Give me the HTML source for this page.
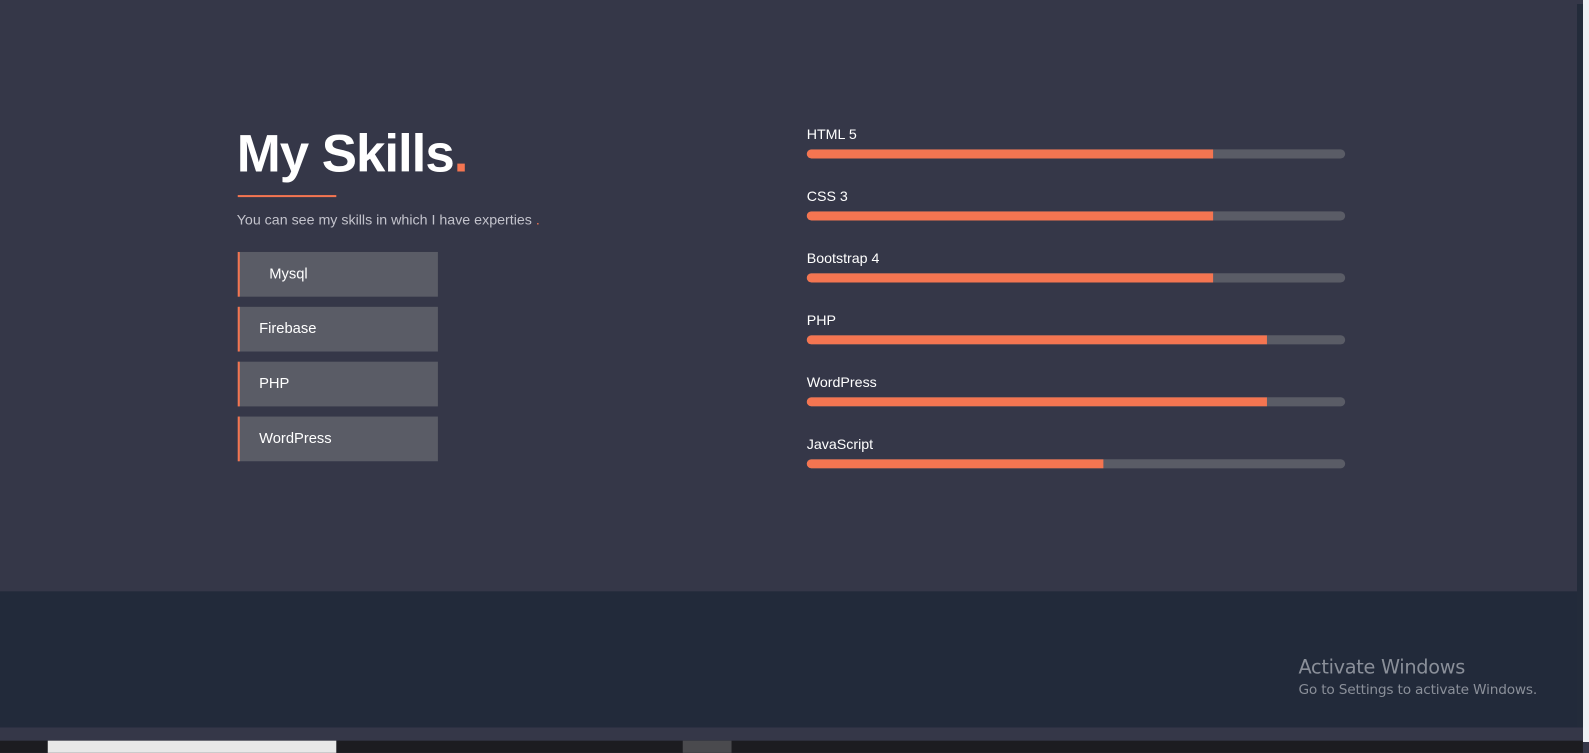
<!DOCTYPE html>
<html><head><meta charset="utf-8"><style>
*{margin:0;padding:0;box-sizing:border-box}
body{width:1589px;height:742px;overflow:hidden;background:#353748;font-family:"Liberation Sans",sans-serif;position:relative}
.abs{position:absolute}
#w{position:absolute;left:0;top:0;width:1564px;height:731px;transform:scale(1.016);transform-origin:0 0}
h1{position:absolute;left:233px;top:122px;font-size:52px;font-weight:bold;color:#fff;letter-spacing:-1px}
h1 span{color:#f47551}
.line{left:234px;top:192px;width:97px;height:2px;background:#f47551}
.sub{left:233px;top:208px;font-size:14px;color:#c3c3cc}
.sub span{color:#f47551}
.box{position:absolute;left:234px;width:197px;height:44px;background:#5a5c66;border-left:2px solid #f47551;color:#fff;font-size:14.5px;line-height:44px;padding-left:19px}
.lbl{position:absolute;left:794px;font-size:14px;color:#fff}
.track{position:absolute;left:794px;width:530px;height:9px;border-radius:5px;background:#5a5c66;overflow:hidden}
.fill{height:100%;background:#f47551;border-radius:5px 0 0 5px}
</style></head><body>
<div id="w">
<h1>My Skills<span>.</span></h1>
<div class="abs line"></div>
<div class="abs sub">You can see my skills in which I have experties <span>.</span></div>
<div class="box" style="top:248px;padding-left:29px">Mysql</div>
<div class="box" style="top:302px">Firebase</div>
<div class="box" style="top:356px">PHP</div>
<div class="box" style="top:410px">WordPress</div>

<div class="lbl" style="top:124px">HTML 5</div>
<div class="track" style="top:147px"><div class="fill" style="width:400px"></div></div>
<div class="lbl" style="top:185px">CSS 3</div>
<div class="track" style="top:208px"><div class="fill" style="width:400px"></div></div>
<div class="lbl" style="top:246px">Bootstrap 4</div>
<div class="track" style="top:269px"><div class="fill" style="width:400px"></div></div>
<div class="lbl" style="top:307px">PHP</div>
<div class="track" style="top:330px"><div class="fill" style="width:453px"></div></div>
<div class="lbl" style="top:368px">WordPress</div>
<div class="track" style="top:391px"><div class="fill" style="width:453px"></div></div>
<div class="lbl" style="top:429px">JavaScript</div>
<div class="track" style="top:452px"><div class="fill" style="width:292px"></div></div>

<div class="abs" style="left:0;top:582px;width:1558px;height:134px;background:#222a3a"></div>
<div class="abs" style="left:0;top:729px;width:1558px;height:12px;background:#1c1c20"></div>
<div class="abs" style="left:47px;top:729px;width:284px;height:12px;background:#e8e8e8"></div>
<div class="abs" style="left:672px;top:729px;width:48px;height:12px;background:#4a4a4e"></div>
<div class="abs" style="left:1278px;top:646px;font-size:19px;color:#8a8f99;font-family:'DejaVu Sans',sans-serif;letter-spacing:-0.3px">Activate Windows</div>
<div class="abs" style="left:1278px;top:671px;font-size:13.5px;color:#8a8f99;font-family:'DejaVu Sans',sans-serif;letter-spacing:-0.2px">Go to Settings to activate Windows.</div>
</div>
<div class="abs" style="left:1577px;top:4px;width:6px;height:723px;background:#232b3a"></div>
<div class="abs" style="left:1583px;top:0;width:6px;height:742px;background:#eef0f4"></div>
</body></html>
